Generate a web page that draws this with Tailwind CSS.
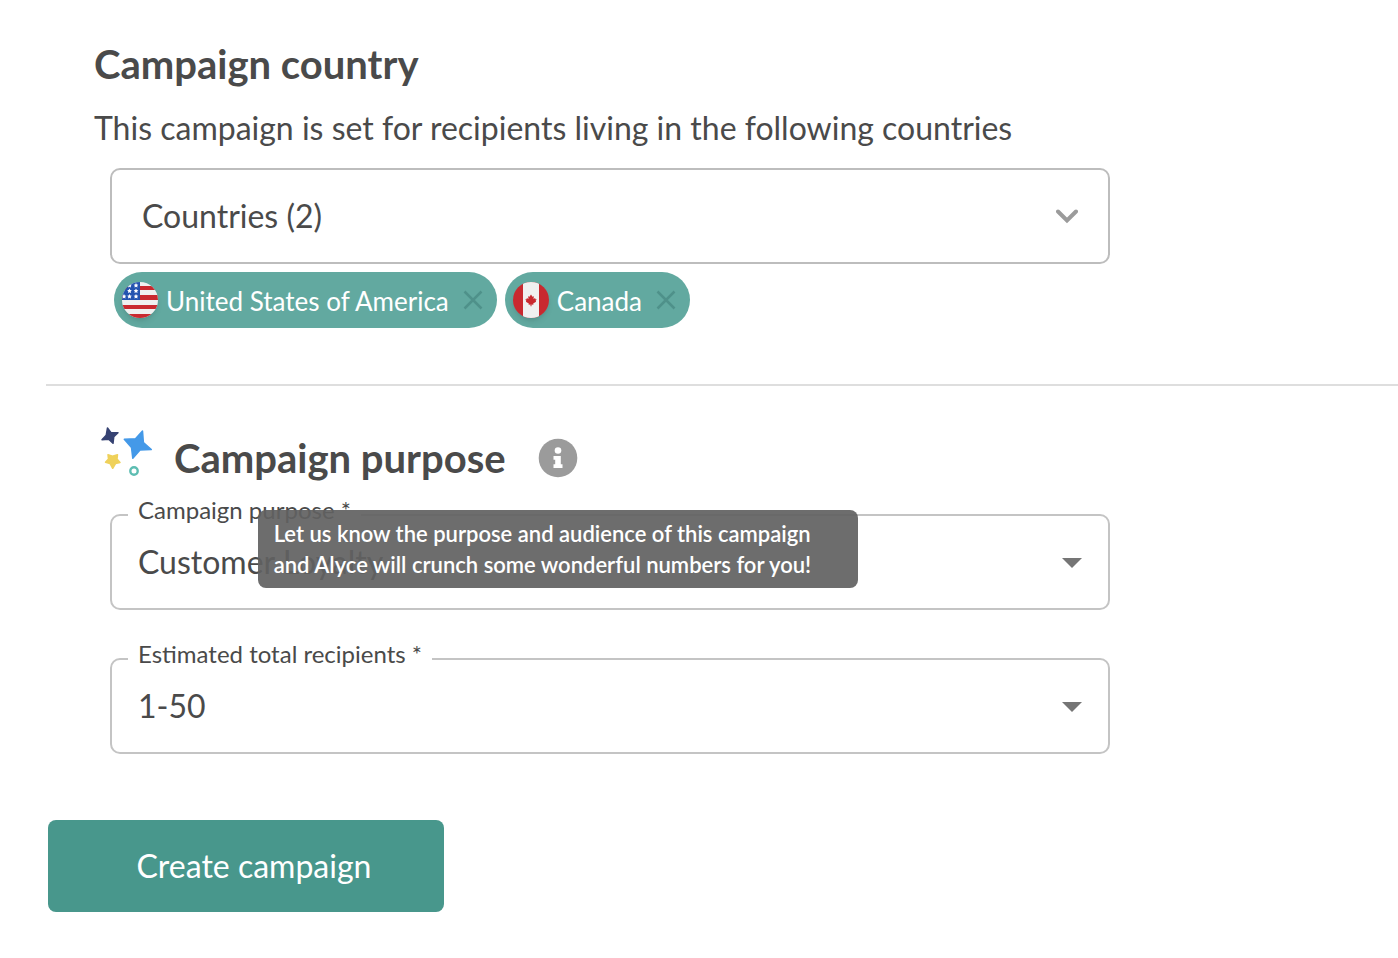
<!DOCTYPE html>
<html lang="en">
<head>
    <meta charset="UTF-8">
    <meta name="viewport" content="width=device-width, initial-scale=1.0">
    <title>Create campaign</title>
    <script src="https://cdn.jsdelivr.net/npm/@tailwindcss/browser@4"></script>
</head>
<body class="bg-white font-['Lato',sans-serif] text-[#4a4a4a]">
    <main class="pl-[46px]">
        <!-- Campaign country -->
        <section class="pt-10 pl-12 pb-14 border-b-2 border-[#dedede]">
            <h2 class="text-[40px] leading-12 font-bold">Campaign country</h2>
            <p class="mt-5 text-[32px] leading-10"><label for="countries">This campaign is set for recipients living in the following countries</label></p>
            <div class="relative mt-5 mx-4 max-w-[1000px]">
                <select id="countries" class="appearance-none block w-full h-24 pl-[30px] pr-20 text-[32px] bg-white border-2 border-[#bdbdbd] rounded-[10px]">
                    <option>Countries (2)</option>
                </select>
                <svg class="absolute right-8 top-9 w-[22px] h-6 text-[#9b9b9b] pointer-events-none" viewBox="0 0 22 24" fill="none" stroke="currentColor" stroke-width="4" stroke-linecap="round">
                    <path d="M2 7.5L11 16.500L20 7.500"></path>
                </svg>
            </div>
            <ul class="flex flex-wrap gap-2 mt-2 ml-5">
                <li class="flex items-center h-14 px-2 rounded-full bg-[#62a9a0] text-white text-[26px]">
                    <svg class="size-9 rounded-full shadow-md" viewBox="0 0 36 36">
                        <rect width="36" height="36" fill="#f0f0f0"></rect>
                        <path fill="#c9292f" d="M0 4h36v4H0zM0 13h36v5H0zM0 23h36v4H0zM0 32h36v4H0z"></path>
                        <rect width="18" height="18" fill="#2454b0"></rect>
                        <path fill="#fff" d="M14 1l.8 1.500 1.600.2-1.200 1.100 .3 1.700-1.500-.8-1.500.8.3-1.700-1.200-1.100 1.600-.2zM7.500 1l.8 1.500 1.600.2-1.200 1.100 .3 1.700-1.500-.8-1.500.8.3-1.700-1.200-1.100 1.600-.2zM14 6.500l.8 1.500 1.600.2-1.200 1.100 .3 1.700-1.500-.8-1.500.8.3-1.700-1.200-1.100 1.600-.2zM7.500 6.500l.8 1.500 1.600.2-1.200 1.100 .3 1.700-1.500-.8-1.500.8.3-1.700-1.200-1.100 1.600-.2zM14 12l.8 1.500 1.600.2-1.200 1.100 .3 1.700-1.500-.8-1.500.8.3-1.700-1.200-1.100 1.600-.2zM7.500 12l.8 1.500 1.600.2-1.200 1.100 .3 1.700-1.500-.8-1.500.8.3-1.700-1.200-1.100 1.600-.2zM2 12l.8 1.500 1.600.2-1.200 1.100 .3 1.700-1.500-.8-1.500.8.3-1.700-1.200-1.100 1.600-.2z"></path>
                    </svg>
                    <span class="ml-2 mt-0.5">United States of America</span>
                    <button type="button" aria-label="Remove United States of America" class="ml-2 text-[#4f918a]">
                        <svg class="size-8" viewBox="0 0 32 32" fill="none" stroke="currentColor" stroke-width="2.500"><path d="M7.500 7.500l17 17M24.500 7.500l-17 17"></path></svg>
                    </button>
                </li>
                <li class="flex items-center h-14 px-2 rounded-full bg-[#62a9a0] text-white text-[26px]">
                    <svg class="size-9 rounded-full shadow-md" viewBox="0 0 36 36">
                        <rect width="36" height="36" fill="#c9292f"></rect>
                        <rect x="10" width="16" height="36" fill="#f0f0f0"></rect>
                        <path fill="#c9292f" d="M18 12.500l1.500 2.300 1.400-.6-.4 2.800 1.600-1 .4 1.200 1.300.3-1.100 1.300.4.9-2.900 1.900.2 1.100-1.900-.3V24.300h-1v-1.900l-1.900.3.2-1.100-2.900-1.900.4-.9-1.100-1.300 1.300-.3.4-1.200 1.600 1-.4-2.800 1.400.6z"></path>
                    </svg>
                    <span class="ml-2 mt-0.5">Canada</span>
                    <button type="button" aria-label="Remove Canada" class="ml-2 text-[#4f918a]">
                        <svg class="size-8" viewBox="0 0 32 32" fill="none" stroke="currentColor" stroke-width="2.500"><path d="M7.500 7.500l17 17M24.500 7.500l-17 17"></path></svg>
                    </button>
                </li>
            </ul>
        </section>

        <!-- Campaign purpose -->
        <section class="pt-10 pl-12">
            <div class="flex items-center h-16">
                <svg class="size-16" viewBox="0 0 64 64" stroke-linejoin="round" stroke-width="1.500">
                    <path fill="#364272" stroke="#364272" d="M13.500 2L17 6.600L24 6.800L19.800 10.700L19 17.300L14.700 13.300L8 13.700L12.200 9.300z"></path>
                    <path fill="#4499e8" stroke="#4499e8" d="M48.500 5L49.400 16.500L57.300 23.500L46 24L38.800 32.300L37.500 21.500L30.300 13.300L41.500 12.800z"></path>
                    <path fill="#efd15a" stroke="#efd15a" d="M14 28.700L18.500 30.300L23.500 28.700L23 33L26 36.500L21.500 37.500L18.700 42.300L16 37.500L11.500 36.300L14.500 33z"></path>
                    <circle cx="40" cy="45" r="3.700" fill="none" stroke="#5dbdb2" stroke-width="2.400"></circle>
                </svg>
                <h2 class="ml-4 text-[40px] leading-12 font-bold">Campaign purpose</h2>
                <div class="relative ml-8">
                    <button type="button" aria-label="About campaign purpose" aria-describedby="purpose-tip" class="block">
                        <svg class="size-10" viewBox="0 0 40 40">
                            <circle cx="20" cy="20" r="19.300" fill="#9b9b9b"></circle>
                            <circle cx="20" cy="12.500" r="3.300" fill="#fff"></circle>
                            <path fill="#fff" d="M15.500 18h7.300v8.300h1.700v3.700h-9v-3.700h1.700v-4.600h-1.700z"></path>
                        </svg>
                    </button>
                    <div id="purpose-tip" role="tooltip" class="absolute z-10 top-full left-1/2 -translate-x-1/2 mt-8 w-[600px] px-4 py-2 rounded-lg bg-[#616161]/92 text-white text-[22px] leading-[31px] font-semibold">
                        Let us know the purpose and audience of this campaign and Alyce will crunch some wonderful numbers for you!
                    </div>
                </div>
            </div>

            <div class="relative mt-6 mx-4 max-w-[1000px]">
                <label for="purpose" class="absolute left-[18px] -top-5 px-[10px] bg-white text-2xl">Campaign purpose *</label>
                <select id="purpose" class="appearance-none block w-full h-24 pl-[26px] pr-20 text-[32px] bg-white border-2 border-[#c4c4c4] rounded-[10px]">
                    <option>Customer Loyalty</option>
                </select>
                <svg class="absolute right-7 top-11 w-5 h-[10px] fill-[#757575] pointer-events-none" viewBox="0 0 20 10"><path d="M0 0h20L10 10z"></path></svg>
            </div>

            <div class="relative mt-12 mx-4 max-w-[1000px]">
                <label for="recipients" class="absolute left-[18px] -top-5 px-[10px] bg-white text-2xl">Estimated total recipients *</label>
                <select id="recipients" class="appearance-none block w-full h-24 pl-[26px] pr-20 text-[32px] bg-white border-2 border-[#c4c4c4] rounded-[10px]">
                    <option>1-50</option>
                </select>
                <svg class="absolute right-7 top-11 w-5 h-[10px] fill-[#757575] pointer-events-none" viewBox="0 0 20 10"><path d="M0 0h20L10 10z"></path></svg>
            </div>
        </section>

        <button type="submit" class="mt-[66px] mb-11 ml-0.5 w-[396px] h-[92px] pl-4 rounded-lg bg-[#48978c] text-white text-[32px]">Create campaign</button>
    </main>
</body>
</html>
